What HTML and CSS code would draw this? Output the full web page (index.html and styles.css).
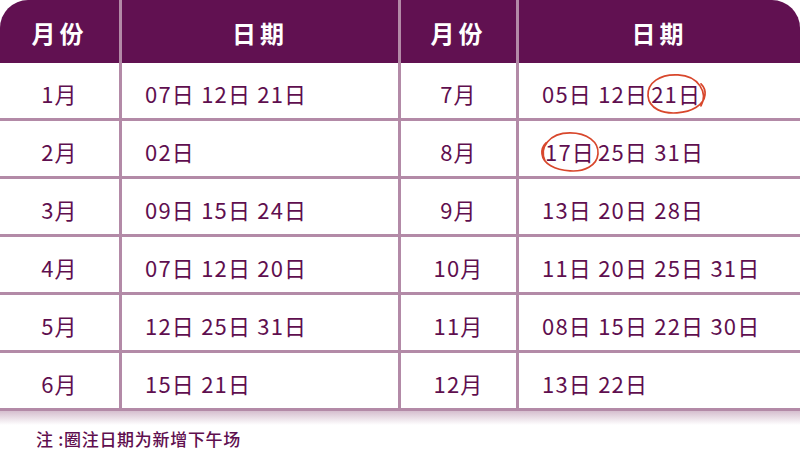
FILE: index.html
```html
<!DOCTYPE html>
<html lang="zh-CN">
<head>
<meta charset="utf-8">
<title>场次日期</title>
<link rel="stylesheet" href="styles.css">
</head>
<body>
<div class="board">
  <div class="table">
    <div class="row head">
      <div class="cell mon">月份</div>
      <div class="cell date">日期</div>
      <div class="cell mon">月份</div>
      <div class="cell date">日期</div>
    </div>
    <div class="row">
      <div class="cell mon">1月</div>
      <div class="cell date">07日 12日 21日</div>
      <div class="cell mon">7月</div>
      <div class="cell date">05日 12日 <span class="circled">21日<svg class="ring" viewBox="0 0 62 44"><path d="M56 34 C63 21 54 4 33 3 C15 2 2 11 3 24 C4 37 18 42 32 41 C47 40 59 33 60 23 C60.5 19 59 15 56 12"/></svg></span></div>
    </div>
    <div class="row">
      <div class="cell mon">2月</div>
      <div class="cell date">02日</div>
      <div class="cell mon">8月</div>
      <div class="cell date"><span class="circled">17日<svg class="ring" viewBox="0 0 62 44"><path d="M6 31 C0 18 10 3 31 3 C48 3 60 12 59 24 C58 36 45 42 31 41 C16 40 4 34 3 24 C2.5 20 4 16 7 13"/></svg></span> 25日 31日</div>
    </div>
    <div class="row">
      <div class="cell mon">3月</div>
      <div class="cell date">09日 15日 24日</div>
      <div class="cell mon">9月</div>
      <div class="cell date">13日 20日 28日</div>
    </div>
    <div class="row">
      <div class="cell mon">4月</div>
      <div class="cell date">07日 12日 20日</div>
      <div class="cell mon">10月</div>
      <div class="cell date">11日 20日 25日 31日</div>
    </div>
    <div class="row">
      <div class="cell mon">5月</div>
      <div class="cell date">12日 25日 31日</div>
      <div class="cell mon">11月</div>
      <div class="cell date">08日 15日 22日 30日</div>
    </div>
    <div class="row">
      <div class="cell mon">6月</div>
      <div class="cell date">15日 21日</div>
      <div class="cell mon">12月</div>
      <div class="cell date">13日 22日</div>
    </div>
  </div>
  <p class="note">注 :圈注日期为新增下午场</p>
</div>
</body>
</html>
```

FILE: styles.css
```css
html, body {
  margin: 0;
  padding: 0;
  background: #ffffff;
}

.board {
  width: 800px;
  height: 472px;
  overflow: hidden;
  font-family: "Noto Sans CJK SC", "Noto Sans", sans-serif;
  color: #5f0f4f;
}

.table {
  display: flex;
  flex-direction: column;
}

.table::after {
  content: "";
  display: block;
  height: 14px;
  background: linear-gradient(to bottom, rgba(179, 138, 167, 0.55), rgba(179, 138, 167, 0));
}

.row {
  display: grid;
  grid-template-columns: 119px 279px 118px 284px;
  height: 55px;
  border-bottom: 3px solid #b38aa7;
}

.row.head {
  height: 63px;
  border-bottom: none;
}

.cell {
  display: flex;
  align-items: center;
  padding-top: 5px;
  box-sizing: border-box;
  font-size: 22px;
  letter-spacing: 1.2px;
  white-space: nowrap;
}

.cell + .cell {
  border-left: 3px solid #b38aa7;
}

.cell.mon {
  justify-content: center;
}

.cell.date {
  padding-left: 23px;
}

.head .cell {
  background: #611151;
  color: #ffffff;
  font-weight: 700;
  font-size: 24px;
  letter-spacing: 4px;
  padding-top: 2px;
}

.head .cell.date {
  padding-left: 0;
  justify-content: center;
}

.head .cell:first-child {
  border-top-left-radius: 28px;
}

.head .cell:last-child {
  border-top-right-radius: 28px;
}

.circled {
  position: relative;
  display: inline-block;
  margin: 0 3px;
}

.ring {
  position: absolute;
  left: 50%;
  top: 50%;
  width: 62px;
  height: 44px;
  transform: translate(-50%, -48%);
  fill: none;
  stroke: #d8472c;
  stroke-width: 1.7;
  stroke-linecap: round;
  overflow: visible;
}

.note {
  margin: 3px 0 0;
  padding-left: 36px;
  font-size: 17px;
  font-weight: 500;
  letter-spacing: 0.7px;
  line-height: 22px;
}
```
